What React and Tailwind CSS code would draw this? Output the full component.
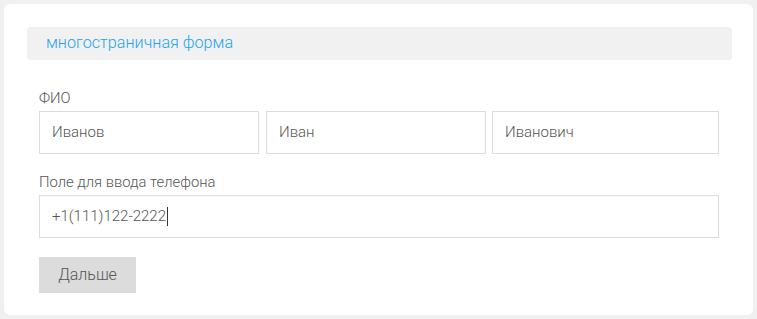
export default function App() {
  return (
    <div className="min-h-[319px] w-full bg-[#f0f0f0] p-[4px]" style={{ fontFamily: 'Roboto, "Noto Sans", sans-serif' }}>
      <div className="rounded-[6px] bg-white pl-[23px] pr-[21px] pt-[23px] pb-[22px]">
        <div className="flex h-[33px] items-center rounded-[4px] bg-[#f1f1f1] px-[19px] text-[16.2px] font-light text-[#1fa3ee]">
          многостраничная форма
        </div>
        <div className="pl-[12px] pr-[13px] pt-[28px] font-light">
          <div className="mb-[3px] text-[14.8px] leading-[20px] text-[#555]">ФИО</div>
          <div className="flex">
            <div className="mr-[7px] flex h-[43px] w-[220px] items-center border border-[#dcdcdc] px-[12px] text-[15px] text-[#555]">Иванов</div>
            <div className="mr-[6px] flex h-[43px] w-[220px] items-center border border-[#dcdcdc] px-[12px] text-[15px] text-[#555]">Иван</div>
            <div className="flex h-[43px] flex-1 items-center border border-[#dcdcdc] px-[12px] text-[15px] text-[#555]">Иванович</div>
          </div>
          <div className="mt-[18px] mb-[3px] text-[14.8px] leading-[20px] text-[#555]">Поле для ввода телефона</div>
          <div className="flex h-[43px] items-center border border-[#dcdcdc] px-[12px] text-[15px] text-[#555]">
            +1(111)122-2222
            <span className="ml-[1px] inline-block h-[19px] w-[1px] bg-[#333]"></span>
          </div>
          <button className="mt-[19px] flex h-[36px] w-[97px] items-center justify-center bg-[#dcdcdc] text-[16px] text-[#555]">
            Дальше
          </button>
        </div>
      </div>
    </div>
  );
}
